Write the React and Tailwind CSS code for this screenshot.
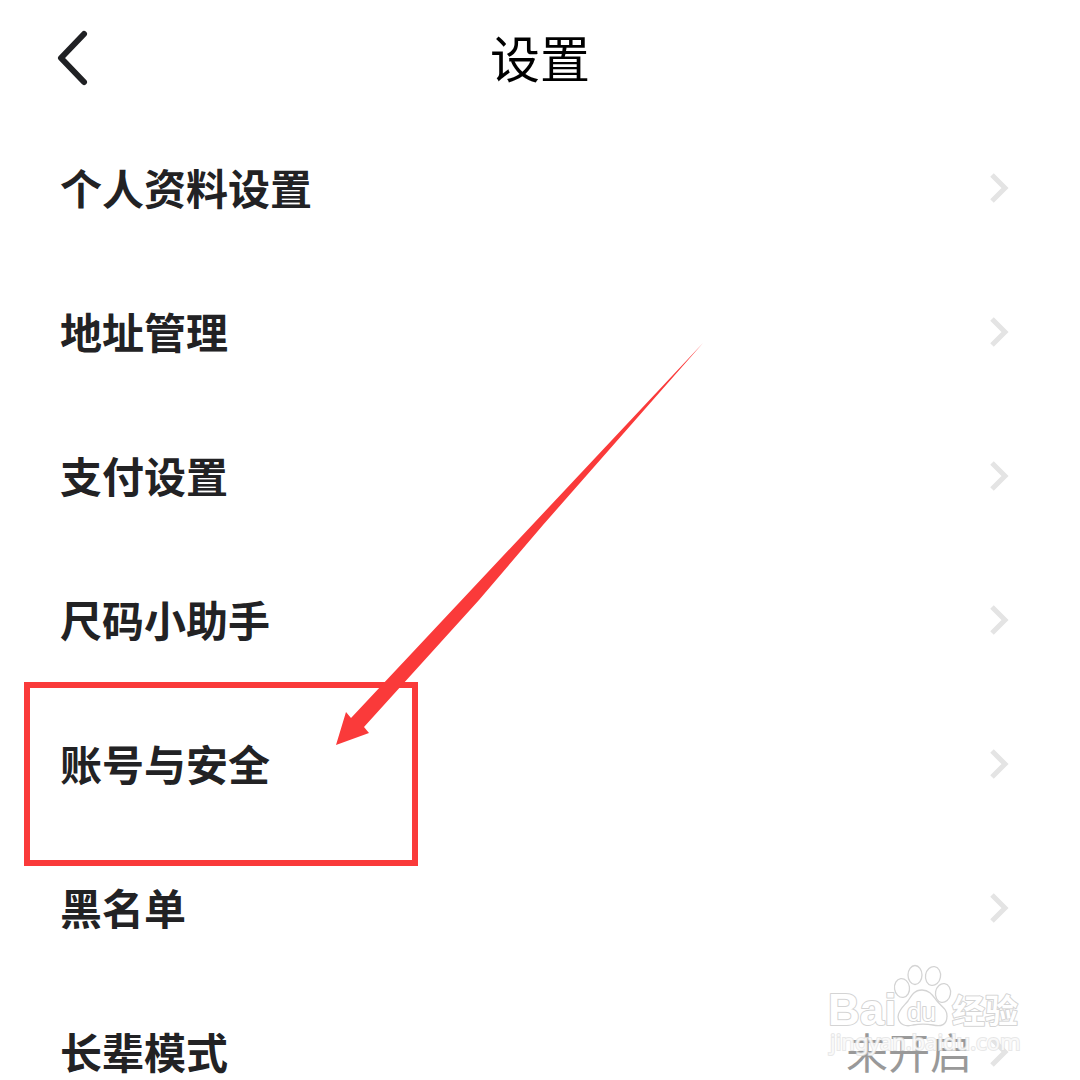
import React from "react";

const ROWS = [
  { label: "个人资料设置" },
  { label: "地址管理" },
  { label: "支付设置" },
  { label: "尺码小助手" },
  { label: "账号与安全", highlighted: true },
  { label: "黑名单" },
  { label: "长辈模式", value: "未开启" },
];

function BackIcon() {
  return (
    <svg className="h-16 w-10" viewBox="0 0 40 64" fill="none" aria-hidden="true">
      <path d="M31 8 L8 32 L31 56" stroke="#202124" strokeWidth="6" strokeLinecap="round" strokeLinejoin="round" />
    </svg>
  );
}

function ChevronIcon() {
  return (
    <svg className="h-8 w-5" viewBox="0 0 20 32" fill="none" aria-hidden="true">
      <path d="M2 3 L15 16 L2 29" stroke="#e4e4e4" strokeWidth="5" />
    </svg>
  );
}

function Highlight() {
  return (
    <div className="pointer-events-none absolute -top-2.5 left-6 h-46 w-[394px] border-[6px] border-[#fa3a3a]">
      <svg className="absolute -top-[345px] left-[306px] h-[410px] w-[370px]" viewBox="0 0 370 410" aria-hidden="true">
        <path d="M367 0 L15 375 L10 369 L0 402 L33 390 L28 384 L143 257 L207 182 Z" fill="#fa3a3a" />
      </svg>
    </div>
  );
}

function SettingRow({ label, value, highlighted }) {
  return (
    <li className="relative">
      <button type="button" className="flex h-36 w-full items-center justify-between pr-[70px] pl-[60px] text-left">
        <span className="pb-0.5 text-[42px] leading-[60px] font-bold text-[#222224]">{label}</span>
        <span className="flex items-center gap-[18px]">
          {value && <span className="pb-0.5 text-[42px] leading-[60px] text-[#999999]">{value}</span>}
          <ChevronIcon />
        </span>
      </button>
      {highlighted && <Highlight />}
    </li>
  );
}

function Watermark() {
  return (
    <svg className="pointer-events-none absolute right-14 bottom-5 h-24 w-50 overflow-visible" viewBox="0 0 200 96" aria-label="Baidu 经验">
      <g fill="#ffffff" stroke="#d4d4d4" strokeWidth="1.300" strokeLinejoin="round">
        <ellipse cx="78" cy="24" rx="7.500" ry="9.500" transform="rotate(-8 78 24)" />
        <ellipse cx="91" cy="11" rx="7" ry="9.500" />
        <ellipse cx="109" cy="12" rx="7.500" ry="9.500" transform="rotate(10 109 12)" />
        <ellipse cx="119" cy="29" rx="7.500" ry="9.500" transform="rotate(10 119 29)" />
        <path d="M98 26 C90 26 87 32 84 37 C80 42 74 46 74 53 C75 61 82 63 89 61 C95 60 103 60 109 61 C117 63 123 61 123 52 C123 45 118 43 113 37 C109 32 106 26 98 26 Z" />
        <g fontFamily="'Liberation Sans', Arial, sans-serif" fontWeight="700" paintOrder="stroke" strokeWidth="2">
          <text x="4" y="61" fontSize="44">Bai</text>
          <text x="128" y="59" fontSize="33" fontFamily="'Noto Sans CJK SC', sans-serif">经验</text>
        </g>
        <text x="83" y="57" fontSize="26" fontFamily="'Liberation Sans', Arial, sans-serif" strokeWidth="2" paintOrder="stroke">
          du
        </text>
      </g>
      <text x="6" y="86" fontSize="22" fontFamily="'Noto Sans', sans-serif" fill="#ffffff" fillOpacity="0.800" stroke="#e2e2e2" strokeWidth="2" strokeOpacity="0.800" paintOrder="stroke">
        jingyan.baidu.com
      </text>
    </svg>
  );
}

export default function App() {
  return (
    <div className="relative h-screen overflow-hidden bg-white font-['Noto_Sans_CJK_SC',sans-serif]">
      <header className="grid h-29 grid-cols-[1fr_auto_1fr] items-center px-[53px]">
        <button type="button" aria-label="返回" className="w-10">
          <BackIcon />
        </button>
        <h1 className="pb-1 text-[50px] leading-[72px] font-normal text-black">设置</h1>
      </header>
      <ul>
        {ROWS.map((row) => (
          <SettingRow key={row.label} {...row} />
        ))}
      </ul>
      <Watermark />
    </div>
  );
}
